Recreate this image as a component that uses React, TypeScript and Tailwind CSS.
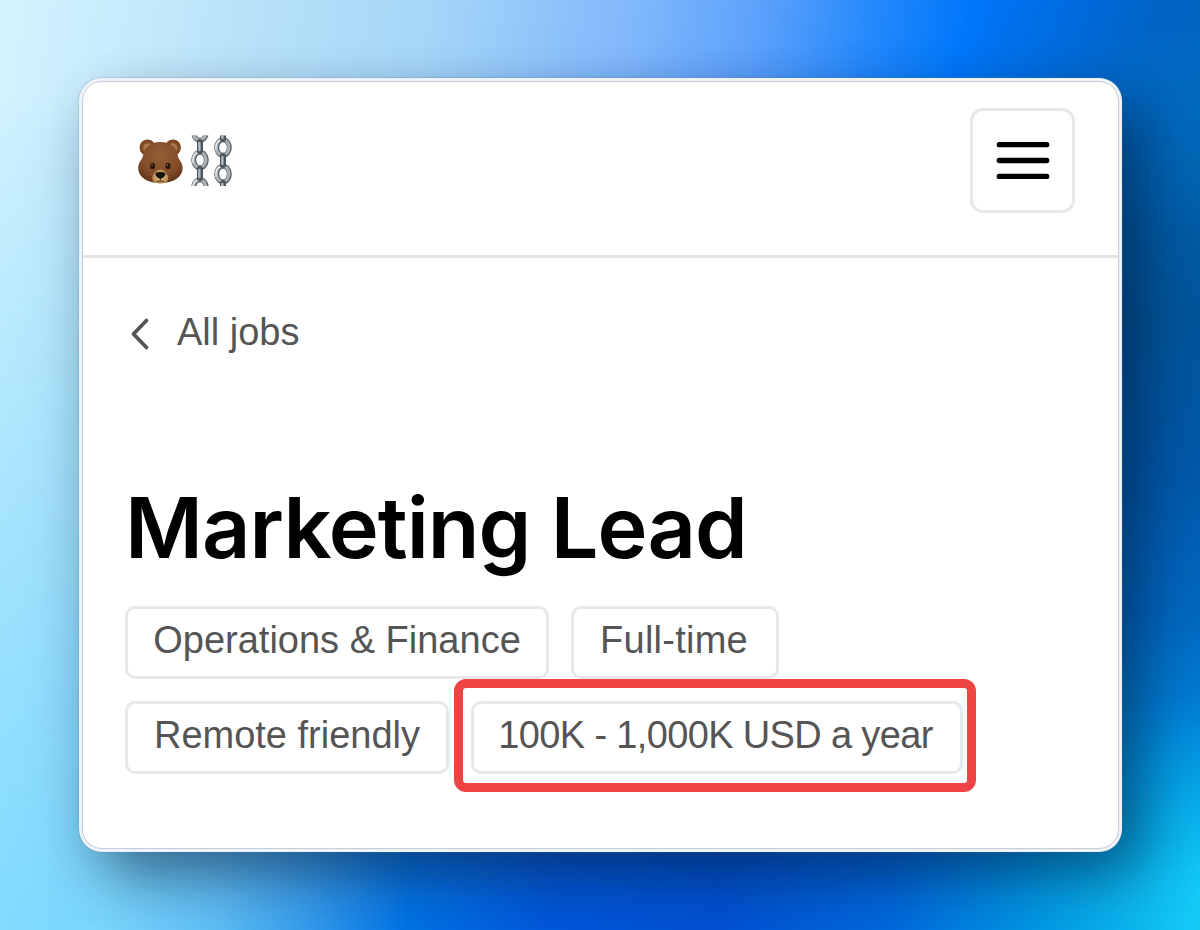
import React from 'react';
import clsx from 'clsx';

interface Tag {
  label: string;
  width: string;
  highlighted?: boolean;
}

const tags: Tag[] = [
  { label: 'Operations & Finance', width: 'w-[424px]' },
  { label: 'Full-time', width: 'w-[208px] pr-[2px] tracking-[0.25px]' },
  { label: 'Remote friendly', width: 'w-[324px]' },
  { label: '100K - 1,000K USD a year', width: 'w-[492px] pr-[3px] tracking-[-0.65px]', highlighted: true }
];

// One vertical chain; each link is [y center, seen side-on]
const Chain: React.FC<{ x: number; links: [number, boolean][] }> = ({ x, links }) => (
  <g>
    {links.filter(([, side]) => !side).map(([y]) => (
      <g key={y} fill="none">
        <ellipse cx={x} cy={y} rx="6.3" ry="7.8" stroke="#596065" strokeWidth="5" />
        <ellipse cx={x - 0.4} cy={y - 0.3} rx="6.3" ry="7.8" stroke="#a9b1b6" strokeWidth="3.2" />
        <path d={`M${x - 7} ${y + 3}v-5q1-4 4-5.200`} stroke="#eef1f3" strokeWidth="1.2" />
      </g>
    ))}
    {links.filter(([, side]) => side).map(([y]) => (
      <g key={y} strokeLinecap="round">
        <path d={`M${x} ${y - 4.5}v9`} stroke="#4d5459" strokeWidth="6" />
        <path d={`M${x - 0.6} ${y - 3.5}v7`} stroke="#b4bcc1" strokeWidth="2.4" />
      </g>
    ))}
  </g>
);

const Logo: React.FC = () => (
  <svg width="118" height="118" viewBox="128 102 118 118" role="img" aria-label="Bear and chains">
    <defs>
      <radialGradient id="fur" cx="0.5" cy="0.35" r="0.65">
        <stop offset="0" stopColor="#966036" />
        <stop offset="0.7" stopColor="#804b27" />
        <stop offset="1" stopColor="#63371a" />
      </radialGradient>
      <radialGradient id="muzzle">
        <stop offset="0" stopColor="#efcf98" />
        <stop offset="1" stopColor="#b98550" />
      </radialGradient>
      <clipPath id="chainArea">
        <rect x="188" y="135.5" width="48" height="50.5" />
      </clipPath>
    </defs>
    <circle cx="147.500" cy="147.500" r="8" fill="#7c4a25" />
    <circle cx="173" cy="147.500" r="8" fill="#7c4a25" />
    <circle cx="148" cy="148" r="4.800" fill="#a97a4c" />
    <circle cx="172.500" cy="148" r="4.800" fill="#a97a4c" />
    <path d="M160.400 142c10 0 16 5 17.500 14 .7 4 4.700 6 4.700 12 0 9-9 15-22.200 15s-22.200-6-22.200-15c0-6 4-8 4.700-12 1.500-9 7.500-14 17.500-14Z" fill="url(#fur)" />
    <path d="M160.300 169.500c3.500 0 8 5 8 8.800s-4 5.200-8 5.200-8-1.400-8-5.200 4.500-8.800 8-8.800Z" fill="url(#muzzle)" />
    <ellipse cx="152.500" cy="166" rx="2.500" ry="3.200" fill="#27160c" />
    <ellipse cx="168" cy="166" rx="2.500" ry="3.200" fill="#27160c" />
    <circle cx="152" cy="165" r="0.800" fill="#b08a6a" />
    <circle cx="167.500" cy="165" r="0.800" fill="#b08a6a" />
    <path d="M155.500 173q4.900-2.200 9.800 0c.4 2.700-2 5.200-4.900 6-2.900-.8-5.300-3.300-4.900-6Z" fill="#17110e" />
    <path d="M160.400 178v2.500m-3.500 1.200q3.500-1.700 7 0" fill="none" stroke="#49301f" strokeWidth="1" />
    <g clipPath="url(#chainArea)">
      {/* the left chain is cut through its end links, so they open outwards */}
      <Chain x={200} links={[[132.5, false], [146.5, true], [160, false], [173.5, true], [187.500, false]]} />
      <Chain x={223} links={[[134.5, true], [147.5, false], [160.5, true], [174, false], [187.5, true]]} />
    </g>
  </svg>
);

const MenuButton: React.FC = () => (
  <button
    type="button"
    aria-label="Open menu"
    className="flex h-[105px] w-[105px] items-center justify-center rounded-[13px] border-[3px] border-[#e8e8e8]"
  >
    <svg width="54" height="38" viewBox="0 0 54 38" stroke="#000" strokeWidth="5.3" strokeLinecap="round">
      <path d="M3.300 2.700h47.400M3.300 18.500h47.400M3.300 34.400h47.400" />
    </svg>
  </button>
);

const Backdrop: React.FC = () => (
  <>
    <div className="col-start-1 row-start-1 bg-[linear-gradient(99deg,#d3f3ff_0%,#c9edfc_8%,#b9e2f8_18%,#a5d6f8_32%,#7db6fb_48%,#5aa0fb_57%,#2489fb_65%,#0077fa_72%,#006ce2_79%,#0064c6_86%,#0066ba_94%)]" />
    <div className="col-start-1 row-start-1 bg-[linear-gradient(90deg,#7edaff_0%,#76d4fc_9%,#5cbdf4_18%,#389fec_25%,#0072e4_34%,#0057da_46%,#0052d2_60%,#0068dc_74%,#0092e2_85%,#0cb4ec_94%,#15ccf8_100%)] [mask-image:linear-gradient(176deg,transparent_10%,#000_94%)]" />
    <div className="col-start-1 row-start-1 ml-[960px] bg-[linear-gradient(180deg,#006ac4_0%,#0062b0_13%,#00559a_34%,#0058a8_50%,#0068c0_66%,#0086da_80%,#00a8e8_91%,#15ccf8_100%)] [mask-image:linear-gradient(90deg,transparent,#000_70%),linear-gradient(180deg,transparent,#000_25%,#000_75%,transparent)] [mask-composite:intersect]" />
  </>
);

const App: React.FC = () => {
  return (
    <div className="grid h-[930px] w-[1200px] overflow-hidden font-['Liberation_Sans',sans-serif]">
      <Backdrop />

      <div className="z-10 col-start-1 row-start-1 mt-[78px] ml-[79px] h-[774px] w-[1043px] rounded-[23px] bg-[#edf3f8] p-[3px] shadow-[0_0_1px_1px_rgba(90,120,150,0.2),0_24px_60px_-8px_rgba(0,30,70,0.22),26px_26px_56px_-4px_rgba(0,15,40,0.42)]">
        <div className="h-full overflow-hidden rounded-[20px] border border-[#c5cdd5] bg-white">
          <header className="flex h-[176px] items-start justify-between border-b-[3px] border-[#e4e4e4] pt-[26px] pr-[43px] pl-[45px]">
            <div className="mt-[-6px]">
              <Logo />
            </div>
            <MenuButton />
          </header>

          <main className="pl-[42px]">
            <a className="mt-[51px] flex h-[44px] items-center text-[38px] leading-[44px] text-[#555]">
              <svg className="mt-[6px] ml-[5px]" width="20" height="34" viewBox="0 0 20 34" fill="none" stroke="#555" strokeWidth="3.8" strokeLinecap="round" strokeLinejoin="round">
                <path d="M16.500 3.500 3.500 17l13 13.500" />
              </svg>
              <span className="mt-px ml-[27px]">All jobs</span>
            </a>

            <h1 className="mt-[124px] font-['Inter',sans-serif] text-[84.5px] leading-[100px] font-semibold tracking-[-0.95px] text-black">
              Marketing Lead
            </h1>

            <div className="mt-[29px] flex w-[900px] flex-wrap gap-[22px]">
              {tags.map(tag => (
                <span
                  key={tag.label}
                  className={clsx(
                    'relative flex h-[73px] items-center justify-center rounded-[10px] border-[3px] border-[#e8e8e8] pb-[5px] text-[38px] leading-none whitespace-nowrap text-[#555]',
                    tag.width
                  )}
                >
                  {tag.label}
                  {tag.highlighted && (
                    <span className="absolute -top-[25px] -right-[16px] -bottom-[21px] -left-[20px] rounded-[12px] border-[9px] border-[#ef4444]" />
                  )}
                </span>
              ))}
            </div>
          </main>
        </div>
      </div>
    </div>
  );
};

export default App;
